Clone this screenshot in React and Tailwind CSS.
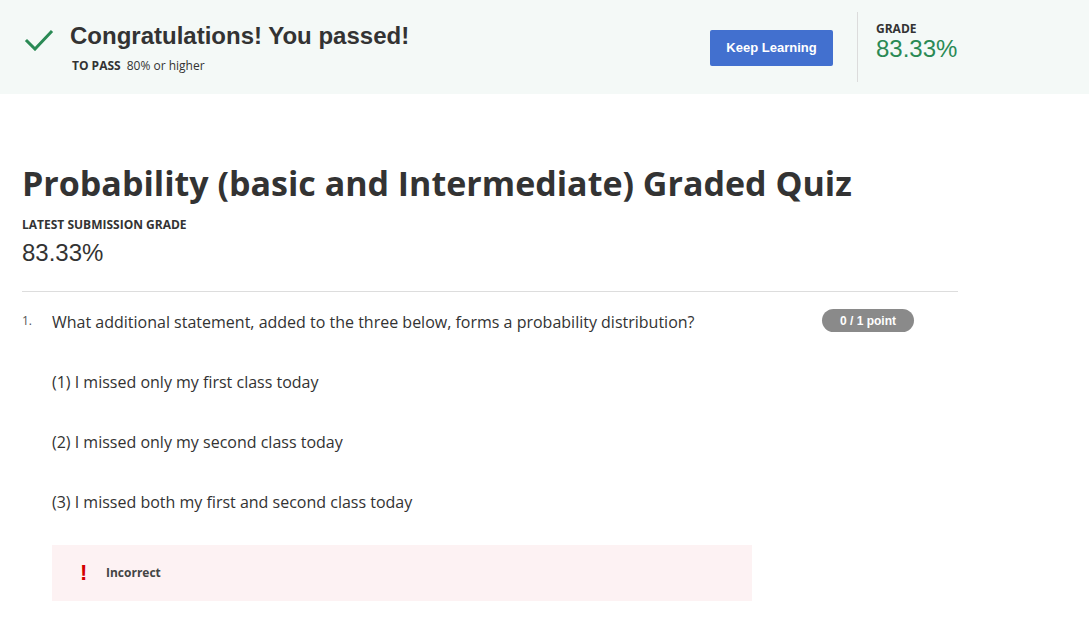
const options = [
  '(1) I missed only my first class today',
  '(2) I missed only my second class today',
  '(3) I missed both my first and second class today',
]

function CheckIcon() {
  return (
    <svg width="30" height="24" viewBox="0 0 30 24" className="shrink-0">
      <path d="M3 14 L11 22 L27 5" fill="none" stroke="#2a8a55" strokeWidth="3" strokeLinecap="square" />
    </svg>
  )
}

export default function App() {
  const open = { fontFamily: '"Open Sans", sans-serif' }
  const arial = { fontFamily: '"Liberation Sans", Arial, sans-serif' }

  return (
    <div className="min-h-[626px] bg-white text-[#333]" style={open}>
      <header className="flex h-[94px] items-stretch bg-[#f4f9f7]">
        <div className="flex flex-1 items-start pl-[24px] pt-[22px]">
          <div className="mt-[5px]">
            <CheckIcon />
          </div>
          <div className="ml-[16px]">
            <h1 className="text-[24px] font-bold leading-[28px] text-[#333]" style={arial}>
              Congratulations! You passed!
            </h1>
            <p className="mt-[8px] pl-[2px] text-[12px] leading-[16px]">
              <span className="font-bold">TO PASS</span>
              <span className="ml-[6px]">80% or higher</span>
            </p>
          </div>
        </div>
        <div className="flex items-center pr-[24px] pt-[2px]">
          <button
            type="button"
            className="h-[36px] w-[123px] rounded-[2px] bg-[#4270cf] text-[13px] font-bold text-white"
            style={arial}
          >
            Keep Learning
          </button>
        </div>
        <div className="my-[12px] w-px bg-[#dcdcdc]" />
        <div className="w-[231px] pl-[18px] pt-[21px]">
          <p className="text-[12px] font-bold leading-[16px] text-[#333]">GRADE</p>
          <p className="mt-[-2px] text-[24px] leading-[28px] text-[#2a8a55]" style={arial}>
            83.33%
          </p>
        </div>
      </header>

      <main className="w-[958px] pl-[22px]">
        <h2 className="mt-[66px] text-[34px] font-bold leading-[46px] text-[#333]">
          Probability (basic and Intermediate) Graded Quiz
        </h2>
        <p className="mt-[11px] text-[12px] font-bold leading-[16px]">LATEST SUBMISSION GRADE</p>
        <p className="mt-[6px] text-[24px] leading-[28px]" style={arial}>83.33%</p>
        <div className="mt-[24px] h-px bg-[#dddddd]" />

        <section className="flex pt-[18px]">
          <span className="w-[30px] pt-[1px] text-[12px] leading-[20px] text-[#555]">1.</span>
          <div className="flex-1">
            <div className="flex items-start justify-between">
              <p className="text-[16px] leading-[24px]">
                What additional statement, added to the three below, forms a probability distribution?
              </p>
              <span
                className="mr-[44px] mt-[-1px] flex h-[23px] w-[92px] items-center justify-center rounded-full bg-[#8a8a8a] text-[12px] font-bold text-white"
                style={arial}
              >
                0 / 1 point
              </span>
            </div>
            <div className="mt-[36px] flex flex-col gap-[36px]">
              {options.map(o => (
                <p key={o} className="text-[16px] leading-[24px]">{o}</p>
              ))}
            </div>
            <div className="mt-[31px] flex h-[56px] w-[700px] items-center bg-[#fdf2f3] pl-[28px]">
              <span className="w-[26px] text-[22px] font-bold leading-none text-[#d40000]" style={arial}>!</span>
              <span className="text-[12px] font-bold text-[#444]">Incorrect</span>
            </div>
          </div>
        </section>
      </main>
    </div>
  )
}
